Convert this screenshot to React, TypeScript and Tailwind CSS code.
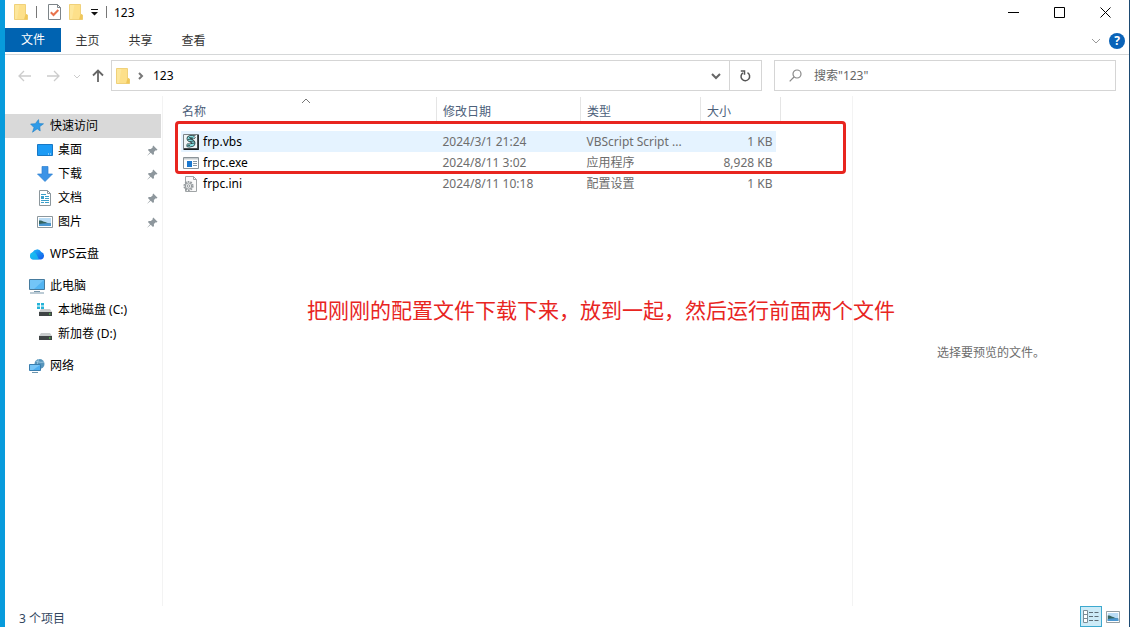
import { ReactNode } from 'react';

interface FileRow {
  name: string;
  date: string;
  type: string;
  size: string;
  icon: ReactNode;
}

interface NavItem {
  label: string;
  icon: ReactNode;
  nested?: boolean;
  pinned?: boolean;
  active?: boolean;
}

function FolderIcon() {
  return (
    <svg width="14" height="16" viewBox="0 0 14 16" aria-hidden="true">
      <path d="M.5 .5h11v9.5l2 1v4.500H.5z" fill="#fde08a" />
      <path d="M.5 .5h5L3 15.500H.5z" fill="#fdeba8" opacity=".6" />
      <path d="M11.500 10l2 1v4.500H10z" fill="#f0c75a" />
      <path d="M.5 .5h11v9.500l2 1v4.500H.5z" fill="none" stroke="#ecc968" strokeWidth=".8" />
    </svg>
  );
}

function CheckDocIcon() {
  return (
    <svg width="13" height="16" viewBox="0 0 13 16" fill="none" aria-hidden="true">
      <path d="M.5 .5h9l3 3v12H.5z" fill="#fff" stroke="#7d8488" />
      <path d="M9.5 .5v3h3" stroke="#7d8488" />
      <path d="M2.8 8.300l2.700 2.700 4.800-5" stroke="#e8734d" strokeWidth="2" />
    </svg>
  );
}

function StarIcon() {
  return (
    <svg width="14" height="14" viewBox="0 0 14 14" aria-hidden="true">
      <path d="M8.5 .6l.5 4 4.500.2-3.700 2.800.4 4.400-3-2.200-4.700 3.400L4 8.600.6 5l4.700-.3z" fill="#2f9be8" stroke="#1d80c8" strokeWidth=".6" />
    </svg>
  );
}

function DesktopIcon() {
  return (
    <svg width="16" height="14" viewBox="0 0 16 14" aria-hidden="true">
      <path d="M.5 1.500h15v11H.5z" fill="#1c9bf5" stroke="#1878c5" />
      <path d="M11 11h1M13 11h1" stroke="#d3ebff" />
    </svg>
  );
}

function DownloadIcon() {
  return (
    <svg width="16" height="16" viewBox="0 0 16 16" aria-hidden="true">
      <path d="M5 .5h6V8h4.500L8 15.500.5 8H5z" fill="#3b93e6" stroke="#2b7fd0" strokeWidth=".7" />
    </svg>
  );
}

function DocumentIcon() {
  return (
    <svg width="16" height="16" viewBox="0 0 16 16" fill="none" aria-hidden="true">
      <path d="M2.500 .5h8l3 3v12h-11z" fill="#fff" stroke="#8b969c" />
      <path d="M10.500 .5v3h3" stroke="#8b969c" />
      <path d="M4 4.500h5M4 6.500h3M8 6.500h4M4 8.500h3M8 8.500h4M4 10.500h8M4 12.500h3M8 12.500h4" stroke="#3c9fc9" />
      <path d="M4 6h3v3H4z" fill="#3c9fc9" />
    </svg>
  );
}

function PictureIcon({ width = 16 }: { width?: number }) {
  return (
    <svg width={width} height="12" viewBox="0 0 16 12" preserveAspectRatio="none" aria-hidden="true">
      <path d="M.5 .5h15v11H.5z" fill="#fff" stroke="#8c979d" />
      <path d="M2 2h12v8H2z" fill="#b9dcf5" />
      <path d="M2 4.500c3-.5 5 1.800 12 3V10H2z" fill="#35645f" />
      <path d="M2 8c4-1 8-1 12-.5V10H2z" fill="#4a97d2" />
    </svg>
  );
}

function CloudIcon() {
  return (
    <svg width="16" height="14" viewBox="0 0 16 14" aria-hidden="true">
      <defs>
        <linearGradient id="cloud" x1="0" y1="0" x2="1" y2="1">
          <stop offset="0" stopColor="#25c4fb" />
          <stop offset=".5" stopColor="#168bf2" />
          <stop offset="1" stopColor="#1456e8" />
        </linearGradient>
      </defs>
      <path d="M4.200 12.500A3.700 3.700 0 013.600 5.300 4.800 4.800 0 0112.300 5a3.900 3.900 0 01-.2 7.500z" fill="url(#cloud)" />
      <path d="M3.600 5.300C7 4.500 8 8.500 10 12.500H4.200A3.700 3.700 0 013.600 5.300z" fill="#19c6ef" opacity=".7" />
    </svg>
  );
}

function ComputerIcon() {
  return (
    <svg width="16" height="16" viewBox="0 0 16 16" aria-hidden="true">
      <path d="M.5 1.500h15v10H.5z" fill="#52b4f2" stroke="#467b9e" />
      <path d="M1 2h14L5 11H1z" fill="#8bd0fa" opacity=".6" />
      <path d="M5 13.500h6M1 15h14" stroke="#7897ab" />
    </svg>
  );
}

function DriveIcon({ system }: { system?: boolean }) {
  return (
    <svg width="16" height="14" viewBox="0 0 16 14" aria-hidden="true">
      {system && <path d="M0 0h3v2.500H0zM4 0h3v2.500H4zM0 3.500h3V6H0zM4 3.500h3V6H4z" fill="#25b3d8" />}
      <path d="M4 6h9l2 3H2z" fill="#c9cccd" />
      <path d="M2 9h13v4H2z" fill="#3f4445" />
      <path d="M12 10.500h1.500v1H12z" fill="#5ef04b" />
    </svg>
  );
}

function NetworkIcon() {
  return (
    <svg width="16" height="16" viewBox="0 0 16 16" aria-hidden="true">
      <circle cx="10.5" cy="6" r="5" fill="#5795bb" />
      <path d="M10 1c-2 2.500-2 7 0 10M7 3c3 1.500 6 1.500 8 1" fill="none" stroke="#a8d2e9" strokeWidth=".8" />
      <path d="M.5 6.500h11v6H.5z" fill="#4daef0" stroke="#3a7eae" />
      <path d="M1 7h10l-7 5H1z" fill="#91d2fa" opacity=".6" />
      <path d="M3 14.500h6" stroke="#6c95ae" />
    </svg>
  );
}

function PinIcon() {
  return (
    <svg width="11" height="11" viewBox="0 0 11 11" aria-hidden="true">
      <path d="M6.300 .5l4.200 4.200-1 .7-.8-.2-1.800 1.900.1 2-1 .9-2.300-2.300L.6 10.600l-.3-.2 2.800-3.200L.9 4.900l.9-1 2.100.2L5.800 2.300l-.2-.9z" fill="#8e979d" />
    </svg>
  );
}

function ScriptIcon() {
  return (
    <svg width="16" height="16" viewBox="0 0 16 16" aria-hidden="true">
      <path d="M.5 .5h14v14H.5z" fill="#eef5f6" stroke="#7b8386" />
      <path d="M15.200 .5v14.700H.5" fill="none" stroke="#161b1d" strokeWidth="1.400" />
      <path d="M11 3.500C8 2.500 5.500 3 5.500 4.700c0 2 5 2 5 4.200 0 2.300-3.500 3-6.500 2.300" fill="none" stroke="#24383b" strokeWidth="3.800" />
      <path d="M11 3.500C8 2.500 5.500 3 5.500 4.700c0 2 5 2 5 4.200 0 2.300-3.500 3-6.500 2.300" fill="none" stroke="#86dde0" strokeWidth="2.400" />
      <path d="M6 3.500l4 .5M5 5.500l4-.5M7 7.500l4-.5M8 9.500l4-.5M3 11l4 .5M10 2l2.500-.5M11 5l1.500-2" fill="none" stroke="#24383b" strokeWidth=".8" />
    </svg>
  );
}

function ExeIcon() {
  return (
    <svg width="16" height="12" viewBox="0 0 16 12" aria-hidden="true">
      <path d="M.5 .5h15v11H.5z" fill="#fff" stroke="#8c9499" />
      <path d="M1 1h14v1.500H1z" fill="#c6cccf" />
      <path d="M4 4h5v6H4z" fill="#1b78d0" />
      <path d="M10 4.500h4M10 6.500h4M10 8.500h4" stroke="#8798a5" />
    </svg>
  );
}

function IniIcon() {
  return (
    <svg width="16" height="16" viewBox="0 0 16 16" fill="none" aria-hidden="true">
      <path d="M2.500 .5h8l3 3v12h-11z" fill="#fafafa" stroke="#a0a4a6" />
      <path d="M10.500 .5v3h3" stroke="#a0a4a6" />
      <circle cx="5.500" cy="10" r="4.300" stroke="#969b9e" strokeWidth="1.600" strokeDasharray="1.700 1" />
      <circle cx="5.500" cy="10" r="3.200" fill="#e6e8e9" stroke="#969b9e" />
      <circle cx="5.500" cy="10" r="1.200" fill="#fff" stroke="#969b9e" />
    </svg>
  );
}

function Chevron({ d, className }: { d: string; className?: string }) {
  return (
    <svg width="10" height="10" viewBox="0 0 10 10" fill="none" stroke="currentColor" className={className} aria-hidden="true">
      <path d={d} />
    </svg>
  );
}

const NAV_GROUPS: NavItem[][] = [
  [
    { label: '快速访问', icon: <StarIcon />, active: true },
    { label: '桌面', icon: <DesktopIcon />, nested: true, pinned: true },
    { label: '下载', icon: <DownloadIcon />, nested: true, pinned: true },
    { label: '文档', icon: <DocumentIcon />, nested: true, pinned: true },
    { label: '图片', icon: <PictureIcon />, nested: true, pinned: true },
  ],
  [{ label: 'WPS云盘', icon: <CloudIcon /> }],
  [
    { label: '此电脑', icon: <ComputerIcon /> },
    { label: '本地磁盘 (C:)', icon: <DriveIcon system />, nested: true },
    { label: '新加卷 (D:)', icon: <DriveIcon />, nested: true },
  ],
  [{ label: '网络', icon: <NetworkIcon /> }],
];

const FILES: FileRow[] = [
  { name: 'frp.vbs', date: '2024/3/1 21:24', type: 'VBScript Script ...', size: '1 KB', icon: <ScriptIcon /> },
  { name: 'frpc.exe', date: '2024/8/11 3:02', type: '应用程序', size: '8,928 KB', icon: <ExeIcon /> },
  { name: 'frpc.ini', date: '2024/8/11 10:18', type: '配置设置', size: '1 KB', icon: <IniIcon /> },
];

const MENU_TABS = ['主页', '共享', '查看'];

function TitleBar() {
  return (
    <header className="flex h-7 items-start pr-px">
      <div className="flex h-6 flex-1 items-center pl-[9px]">
        <FolderIcon />
        <span className="ml-2 h-3 w-px bg-[#777]" />
        <button className="ml-[11px]" aria-label="属性"><CheckDocIcon /></button>
        <button className="ml-2" aria-label="新建文件夹"><FolderIcon /></button>
        <button className="ml-2" aria-label="自定义快速访问工具栏">
          <svg width="7" height="7" viewBox="0 0 7 7" aria-hidden="true">
            <path d="M0 0h7v1H0zM0 3h7L3.500 6.500z" fill="#111" />
          </svg>
        </button>
        <span className="ml-2 h-3 w-px bg-[#777]" />
        <h1 className="ml-[7px] pt-px text-xs text-black">123</h1>
      </div>
      <div className="flex h-6 text-black">
        <button className="grid w-[46px] place-items-center" aria-label="最小化">
          <svg width="11" height="11" viewBox="0 0 11 11" stroke="currentColor"><path d="M0 5.500h11" /></svg>
        </button>
        <button className="grid w-[46px] place-items-center" aria-label="最大化">
          <svg width="11" height="11" viewBox="0 0 11 11" fill="none" stroke="currentColor"><path d="M.5 .5h10v10H.5z" /></svg>
        </button>
        <button className="grid w-[46px] place-items-center" aria-label="关闭">
          <svg width="11" height="11" viewBox="0 0 11 11" stroke="currentColor"><path d="M.5 .5l10 10M10.500 .5l-10 10" /></svg>
        </button>
      </div>
    </header>
  );
}

function MenuBar() {
  return (
    <nav className="flex h-[27px] items-start border-b border-[#d5d7d8] text-xs text-[#333]">
      <button className="h-6 w-14 bg-[#0063b1] text-white">文件</button>
      {MENU_TABS.map(tab => (
        <button key={tab} className="h-6 w-[53px] pt-px">{tab}</button>
      ))}
      <div className="ml-auto flex h-6 items-center gap-2 pt-0.5 pr-1">
        <button aria-label="展开功能区">
          <Chevron d="M1 3l4 4 4-4" className="text-[#999]" />
        </button>
        <button className="size-4 rounded-full bg-[#0a63b8] text-xs leading-4 font-bold text-white" aria-label="帮助">?</button>
      </div>
    </nav>
  );
}

function AddressBar() {
  return (
    <div className="flex items-center py-[5px] pr-[13px] pl-3 text-xs">
      <div className="flex w-[94px] items-center pl-px text-[#ccc]">
        <button aria-label="后退">
          <svg width="13" height="12" viewBox="0 0 13 12" fill="none" stroke="currentColor" strokeWidth="1.300"><path d="M13 6H1M6 1L1 6l5 5" /></svg>
        </button>
        <button className="ml-4" aria-label="前进">
          <svg width="13" height="12" viewBox="0 0 13 12" fill="none" stroke="currentColor" strokeWidth="1.300"><path d="M0 6h12M7 1l5 5-5 5" /></svg>
        </button>
        <button className="ml-3" aria-label="最近浏览的位置">
          <Chevron d="M2 4l3 3 3-3" />
        </button>
        <button className="ml-[10px] text-[#666]" aria-label="上移">
          <svg width="12" height="13" viewBox="0 0 12 13" fill="none" stroke="currentColor" strokeWidth="1.800"><path d="M6 13V1.500M1 6.500l5-5 5 5" /></svg>
        </button>
      </div>
      <div className="flex h-[31px] flex-1 items-stretch border border-[#d5d5d5]">
        <div className="flex flex-1 items-center pl-1">
          <FolderIcon />
          <Chevron d="M3 2l3 3-3 3" className="ml-[6px] stroke-2 text-[#777]" />
          <span className="ml-[7px] text-black">123</span>
        </div>
        <button className="w-[26px] pl-2" aria-label="以前的位置">
          <Chevron d="M1 3l4 4 4-4" className="stroke-2 text-[#666]" />
        </button>
        <button className="grid w-8 place-items-center border-l border-[#d5d5d5] text-[#555]" aria-label="刷新">
          <svg width="11" height="12" viewBox="0 0 11 12" fill="none" stroke="currentColor" strokeWidth="1.500">
            <path d="M3 2.800A4.300 4.300 0 107.500 2.700" />
            <path d="M.8 1h3.700v3.700" />
          </svg>
        </button>
      </div>
      <label className="ml-3 flex h-[31px] w-[342px] shrink items-center border border-[#d5d5d5] pl-[14px] text-[#666]">
        <svg width="13" height="13" viewBox="0 0 13 13" fill="none" stroke="#888" strokeWidth="1.200" aria-hidden="true">
          <circle cx="8" cy="5" r="4" />
          <path d="M5 8L.7 12.300" />
        </svg>
        <input type="search" aria-label="搜索" placeholder={'搜索"123"'} className="ml-3 min-w-0 flex-1 bg-transparent outline-none placeholder:text-[#666]" />
      </label>
    </div>
  );
}

function Sidebar() {
  return (
    <aside className="flex w-[158px] shrink-0 flex-col gap-2 border-r border-[#f3f3f3] pt-[18px] pr-px text-xs text-black">
      {NAV_GROUPS.map((group, i) => (
        <ul key={i}>
          {group.map(item => (
            <li key={item.label}>
              <a
                href="#"
                className={`flex h-6 items-center gap-[5px] pr-[3px] ${item.nested ? 'pl-8' : 'pl-6'} ${item.active ? 'bg-[#d9d9d9]' : ''}`}
              >
                <span className="grid w-4 place-items-center">{item.icon}</span>
                <span>{item.label}</span>
                {item.pinned && <span className="ml-auto"><PinIcon /></span>}
              </a>
            </li>
          ))}
        </ul>
      ))}
    </aside>
  );
}

function FileTable() {
  return (
    <table className="w-[600px] table-fixed text-left text-xs text-[#6d6d6d]">
      <colgroup>
        <col />
        <col className="w-36" />
        <col className="w-[120px]" />
        <col className="w-[76px]" />
        <col className="w-1" />
      </colgroup>
      <thead className="text-[#4c607a]">
        <tr className="h-6">
          <th className="relative border-r border-[#e5e5e5] pt-[6px] pl-px font-normal">
            名称
            <Chevron d="M1 6l4-4 4 4" className="absolute top-0 left-[120px] text-[#777]" />
          </th>
          <th className="border-r border-[#e5e5e5] pt-[6px] pl-[6px] font-normal">修改日期</th>
          <th className="border-r border-[#e5e5e5] pt-[6px] pl-[6px] font-normal">类型</th>
          <th colSpan={2} className="border-r border-[#e5e5e5] pt-[6px] pl-[6px] font-normal">大小</th>
        </tr>
        <tr className="h-[10px]" />
      </thead>
      <tbody>
        {FILES.map((file, i) => (
          <tr key={file.name} className="h-[21px] first:*:bg-[#e5f3ff]">
            <td className="text-black">
              <div className="flex items-center gap-1 pl-0.5">
                {file.icon}
                <span>{file.name}</span>
              </div>
            </td>
            <td className="pl-[6px]">{file.date}</td>
            <td className="pl-[6px]">{file.type}</td>
            <td className="pr-1 text-right">{file.size}</td>
            {i === 0 && <td className="bg-white!" />}
          </tr>
        ))}
      </tbody>
    </table>
  );
}

function StatusBar() {
  return (
    <footer className="flex h-[21px] items-center pr-[9px] pl-[14px] text-xs text-[#33475f]">
      <span className="flex-1 pt-1">3 个项目</span>
      <button className="grid h-[21px] w-[22px] place-items-center border border-[#3ca9cf] bg-[#cdebf7]" aria-label="详细信息">
        <svg width="16" height="13" viewBox="0 0 16 13" fill="none" aria-hidden="true">
          <path d="M.5 .5h4v12h-4zM.5 4.500h4M.5 8.500h4" fill="#fff" stroke="#7c8d96" />
          <path d="M6 2.500h4M11.500 2.500h4M6 6.500h4M11.500 6.500h4M6 10.500h4M11.500 10.500h4" stroke="#5e6d76" />
        </svg>
      </button>
      <button className="ml-1" aria-label="大图标"><PictureIcon width={14} /></button>
    </footer>
  );
}

export default function App() {
  return (
    <div className="flex min-h-screen flex-col border-r border-l-[5px] border-r-[#1d4a72] border-l-[#079bdc] bg-white font-['Noto_Sans','Noto_Sans_CJK_SC',sans-serif]">
      <TitleBar />
      <MenuBar />
      <AddressBar />
      <main className="flex flex-1">
        <Sidebar />
        <section className="relative min-w-0 flex-1 pt-px pl-[18px]">
          <FileTable />
          <div className="absolute top-[25px] left-3 h-[53px] w-[671px] rounded-sm border-3 border-[#e8251f]" />
          <p className="absolute top-[198px] left-36 text-[21px] leading-8 whitespace-nowrap text-[#e8251f]">
            把刚刚的配置文件下载下来，放到一起，然后运行前面两个文件
          </p>
        </section>
        <aside className="grid w-[277px] shrink-0 place-items-center border-l border-[#f3f3f3] pt-1 text-xs text-[#6d6d6d]">
          选择要预览的文件。
        </aside>
      </main>
      <StatusBar />
    </div>
  );
}
